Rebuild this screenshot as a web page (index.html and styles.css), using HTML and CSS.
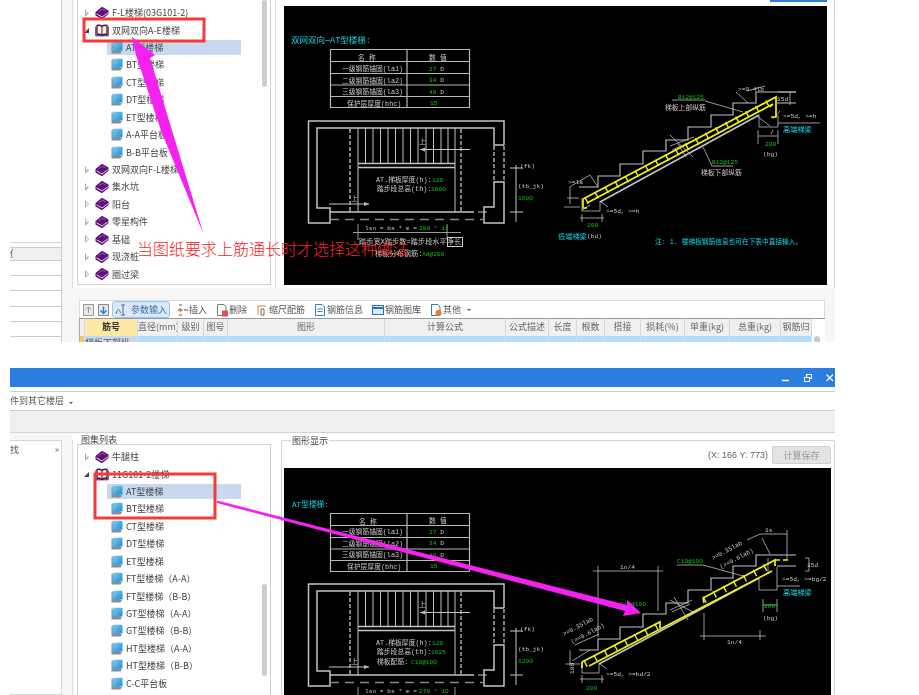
FILE: index.html
```html
<!DOCTYPE html>
<html lang="zh-CN">
<head>
<meta charset="utf-8">
<title>图集列表</title>
<link rel="stylesheet" href="styles.css">
</head>
<body>
<svg class="defs" width="0" height="0">
  <defs>
    <linearGradient id="docfill" x1="0" y1="0" x2="1" y2="1">
      <stop offset="0" stop-color="#7fd0f2"/>
      <stop offset="1" stop-color="#1c86cf"/>
    </linearGradient>
    <symbol id="book" viewBox="0 0 14 14">
      <path d="M.5 6 7 .8 13.500 4.500V8L7 13.200 .5 9.500Z" fill="#5e1078"/>
      <path d="M1.500 7.800 7 11 12.800 6.800" fill="none" stroke="#e4d4ec" stroke-width="1"/>
      <path d="M3.500 5.800 7.500 3.200 10.500 4.800" fill="none" stroke="#9a58b4" stroke-width="1"/>
    </symbol>
    <symbol id="open" viewBox="0 0 14 14">
      <path d="M2 2.500C4 2 6 2.500 7 3.500 8 2.500 10 2 12 2.500V11.500C10 11 8 11.500 7 12.500 6 11.500 4 11 2 11.500Z" fill="#fdf4d0" stroke="#4a1458" stroke-width="1.300"/>
      <path d="M7 3.500V12.500" stroke="#4a1458"/>
      <path d="M.8 3.500V12.800H13.200V3.500" fill="none" stroke="#4a1458"/>
    </symbol>
    <symbol id="doc" viewBox="0 0 12 13">
      <path d="M.5 2V12.500H9.500L11 10H2V2Z" fill="#8c8c8c"/>
      <path d="M1.500 .8H10.500C11.300 .8 11.500 1.200 11.500 2V9.500C9.500 9.500 6 10 1.500 11Z" fill="url(#docfill)"/>
    </symbol>
    <g id="plan" fill="none" stroke="#c4c4c4">
      <path stroke-width="1.500" d="M504 145V121H308.500V223H330V208H317V128H494V145H504M504 182H494V207H484V223H504Z"/>
      <path stroke-dasharray="4 2" stroke-width="1.300" d="M494 146V182M504 146V182M350 129V212M461 129V212"/>
      <path d="M358 128V212M455 128V212M365.500 128V163M373 128V163M380.500 128V163M388 128V163M395.500 128V163M403 128V163M410.500 128V163M418 128V163M426 128V163M433.500 128V163M441 128V163M448 128V163"/>
      <path stroke-width="1.300" d="M358 163.500H455M358 167.500H455M330 212H474"/>
      <path d="M420 149.500H470M329 204H369M478 212H487M510 168H523M510 212H523M516 165V222"/>
      <path stroke="#888" stroke-width="1.400" stroke-dasharray="9 6" d="M330 219.500H484"/>
    </g>
    <g id="grid" fill="none" stroke="#b8b8b8">
      <path stroke-width="1.200" d="M330.500 49.500H469.500V107.500H330.500ZM407 49.500V107.500"/>
      <path stroke-width="1.200" d="M331 61.500H469M331 73.500H469M331 85H469M331 96.500H469"/>
    </g>
    <path id="steps" fill="none" stroke="#c4c4c4" stroke-width="1.100" d="M579 187H598V176H620V164H643V151H666V140H688V127H711V115H733V103H756V92H796M777 103H796"/>
  </defs>
</svg>

<section class="shot shot-top">
  <aside class="side">
    <div class="side-line"></div>
    <div class="side-head"><span class="side-cap">值</span></div>
    <div class="side-row"></div>
    <div class="side-row"></div>
    <div class="side-row"></div>
    <div class="side-row"></div>
    <div class="side-row"></div>
  </aside>
  <div class="work">
    <div class="panes panes-top">
      <div class="tree tree-top">
        <div class="bar bar-top"></div>
        <div class="node"><i class="exp"></i><svg class="ico-book"><use href="#book"/></svg><span>F-L楼梯(03G101-2)</span></div>
        <div class="node"><i class="exp on"></i><svg class="ico-book"><use href="#open"/></svg><span>双网双向A-E楼梯</span></div>
        <div class="leaf sel"><svg class="ico-doc"><use href="#doc"/></svg><span>AT型楼梯</span></div>
        <div class="leaf"><svg class="ico-doc"><use href="#doc"/></svg><span>BT型楼梯</span></div>
        <div class="leaf"><svg class="ico-doc"><use href="#doc"/></svg><span>CT型楼梯</span></div>
        <div class="leaf"><svg class="ico-doc"><use href="#doc"/></svg><span>DT型楼梯</span></div>
        <div class="leaf"><svg class="ico-doc"><use href="#doc"/></svg><span>ET型楼梯</span></div>
        <div class="leaf"><svg class="ico-doc"><use href="#doc"/></svg><span>A-A平台板</span></div>
        <div class="leaf"><svg class="ico-doc"><use href="#doc"/></svg><span>B-B平台板</span></div>
        <div class="node"><i class="exp"></i><svg class="ico-book"><use href="#book"/></svg><span>双网双向F-L楼梯</span></div>
        <div class="node"><i class="exp"></i><svg class="ico-book"><use href="#book"/></svg><span>集水坑</span></div>
        <div class="node"><i class="exp"></i><svg class="ico-book"><use href="#book"/></svg><span>阳台</span></div>
        <div class="node"><i class="exp"></i><svg class="ico-book"><use href="#book"/></svg><span>零星构件</span></div>
        <div class="node"><i class="exp"></i><svg class="ico-book"><use href="#book"/></svg><span>基础</span></div>
        <div class="node"><i class="exp"></i><svg class="ico-book"><use href="#book"/></svg><span>现浇桩</span></div>
        <div class="node"><i class="exp"></i><svg class="ico-book"><use href="#book"/></svg><span>圈过梁</span></div>
      </div>
      <div class="view view-top">
        <div class="save-edge"></div>
        <svg class="cad cad-top" viewBox="284 6 543 279">
          <text class="c-ti" x="291" y="43">双网双向—AT型楼梯:</text>
          <use href="#grid"/>
          <text class="c-w" x="358" y="60">名 称</text>
          <text class="c-w" x="429" y="60">数 值</text>
          <text class="c-w" x="342" y="71">一级钢筋锚固(la1)</text>
          <text class="c-w" x="342" y="83">二级钢筋锚固(la2)</text>
          <text class="c-w" x="342" y="94">三级钢筋锚固(la3)</text>
          <text class="c-w" x="347" y="106">保护层厚度(bhc)</text>
          <text class="c-g" x="429" y="71">27 <tspan class="c-n">D</tspan></text>
          <text class="c-g" x="429" y="82">34 <tspan class="c-n">D</tspan></text>
          <text class="c-g" x="429" y="94">40 <tspan class="c-n">D</tspan></text>
          <text class="c-g" x="430" y="105">15</text>
          <use href="#plan"/>
          <path class="c-tick" d="M420 149.500l5-2v4ZM369 204l-5-2v4Z"/>
          <text class="c-w" x="419" y="144">上</text>
          <text class="c-w" x="351" y="201">上</text>
          <text class="c-w" x="376" y="182">AT.梯板厚度(h):</text><text class="c-g" x="432" y="182">120</text>
          <text class="c-w" x="377" y="191">踏步段总高(th):</text><text class="c-g" x="431" y="191">1800</text>
          <text class="c-n" x="520" y="168">(fk)</text>
          <text class="c-n" x="518" y="188">(tb_jk)</text>
          <text class="c-g" x="518" y="200">1600</text>
          <path class="c-line" d="M353 232.500H461M358 224V240M447 224V240"/>
          <text class="c-n" x="365" y="230">lsn = bs * m = </text><text class="c-g" x="419" y="230">280 * 11</text>
          <text class="c-m" x="359" y="244">踏步宽X踏步数=踏步段水平净长</text>
          <rect class="c-box" x="447.500" y="237.500" width="15" height="9"/>
          <text class="c-m" x="375" y="256">梯板分布钢筋:</text><text class="c-g" x="422" y="256">A8@200</text>

          <use href="#steps"/>
          <path class="c-line" d="M582 198V211H600V201M759 115V127H778V115M778 123H820M672 100H705M705 101 743 112M703 147 712 166H733M567 198H579M570 186V204M564 207H580M736 92 748 103M747 91 765 86M790 92V105M778 92H796M773 130 771 134M758 130V144M778 130V144M758 136H778M580 218H604M582 214V222M602 214V222M600 201 608 207M571 186 590 175 598 187M773 119 780 111M757 116 770 126M582 210 590 205"/>
          <path class="c-thick" d="M600 202 759 115"/>
          <path class="c-line" d="M670 135 693 157M670 146 694 137M672 150 690 142M686 157 678 144"/>
          <path class="c-yl" d="M583 199 776 97V117H771M583 199V208H587M587 203 773 104 770 107"/>
          <path class="c-tk" d="M586 201 774 100"/>
          <text class="c-n" x="738" y="91">&gt;=0.4lb</text>
          <text class="c-n" x="777" y="101">15d</text>
          <text class="c-n" x="783" y="118">&gt;=5d, &gt;=h</text>
          <text class="c-cy" x="783" y="132">高端梯梁</text>
          <text class="c-g" x="765" y="146">200</text>
          <text class="c-n" x="763" y="156">(bg)</text>
          <text class="c-g" x="678" y="99">B12@125</text>
          <text class="c-w" x="665" y="110">梯板上部纵筋</text>
          <text class="c-g" x="712" y="164">B12@125</text>
          <text class="c-w" x="701" y="175">梯板下部纵筋</text>
          <text class="c-n" x="568" y="184">&gt;=la</text>
          <text class="c-n" x="606" y="213">&gt;=5d, &gt;=h</text>
          <text class="c-g" x="587" y="227">200</text>
          <text class="c-cy" x="558" y="239">低端梯梁</text><text class="c-n" x="587" y="238">(bd)</text>
          <text class="c-cs" x="655" y="244">注: 1. 楼梯板钢筋信息也可在下表中直接输入。</text>
        </svg>
      </div>
    </div>
    <div class="lower">
      <div class="tools">
        <span class="tl tl-sq"><svg class="ti"><path d="M1.500 1.500H11.500V12.500H1.500ZM6.500 10V4M4 6.500 6.500 4 9 6.500" fill="#e8e8e8" stroke="#999"/></svg></span>
        <span class="tl tl-sq"><svg class="ti"><path d="M1.500 1.500H11.500V12.500H1.500Z" fill="#e8e8e8" stroke="#888"/><path d="M6.500 3.500V10M3.500 7.500 6.500 10.500 9.500 7.500" fill="none" stroke="#2a7fd8" stroke-width="1.500"/></svg></span>
        <span class="tl tl-on"><svg class="ti"><path d="M1 11C3 5 4 5 5.500 10M8 2V12M6 2H10M6 12H10" fill="none" stroke="#667"/></svg>参数输入</span>
        <span class="tl"><svg class="ti"><path d="M3 2H6M3 12H6M8 7H12M2 7H7" fill="none" stroke="#555"/><path d="M2 7 5 4.500V9.500Z" fill="#e67a1e"/></svg>插入</span>
        <span class="tl"><svg class="ti"><path d="M1.500 1.500H8L10 4V12.500H1.500Z" fill="#fff" stroke="#777"/><rect x="6" y="7.500" width="6" height="6" fill="#d9534f"/></svg>删除</span>
        <span class="tl"><svg class="ti"><path d="M2 3H10M2 3V12" fill="none" stroke="#e08030"/><path d="M5 6H8V12H5Z" fill="none" stroke="#666"/></svg>缩尺配筋</span>
        <span class="tl"><svg class="ti"><path d="M1.500 1.500H8L10.500 4V12.500H1.500Z" fill="#fff" stroke="#3a7cc0"/><path d="M3.500 6H8.500M3.500 8.500H8.500" stroke="#3a7cc0"/></svg>钢筋信息</span>
        <span class="tl"><svg class="ti"><rect x=".5" y="2.500" width="11" height="9" fill="#dceaf8" stroke="#2a70b8"/><path d="M.5 5H11.500" stroke="#2a70b8" stroke-width="2"/></svg>钢筋图库</span>
        <span class="tl"><svg class="ti"><path d="M1.500 1.500H8L10 4V12.500H1.500Z" fill="#fff" stroke="#3a7cc0"/><circle cx="8.500" cy="10" r="3" fill="#e67a1e"/></svg>其他<i class="drop"></i></span>
      </div>
      <div class="table">
        <div class="th gut"></div><div class="th th-key">筋号</div><div class="th">直径(mm)</div><div class="th">级别</div><div class="th">图号</div><div class="th">图形</div><div class="th">计算公式</div><div class="th">公式描述</div><div class="th">长度</div><div class="th">根数</div><div class="th">搭接</div><div class="th">损耗(%)</div><div class="th">单重(kg)</div><div class="th">总重(kg)</div><div class="th">钢筋归</div><div class="sb"></div>
        <div class="td gut-y"></div><div class="td td-key">梯板下部纵</div><div class="td"></div><div class="td"></div><div class="td"></div><div class="td"></div><div class="td"></div><div class="td"></div><div class="td"></div><div class="td"></div><div class="td"></div><div class="td"></div><div class="td"></div><div class="td"></div><div class="td"></div><div class="sb sb-b"></div>
      </div>
    </div>
  </div>
</section>

<section class="shot shot-bot">
  <header class="title">
    <svg class="wbtn" viewBox="0 0 10 10"><path d="M1 7.500H8" stroke="#fff" stroke-width="1.500"/></svg>
    <svg class="wbtn" viewBox="0 0 10 10"><path d="M1.500 4.500H6.500V8.500H1.500ZM3.500 4V1.500H8.500V5.500H7" fill="none" stroke="#fff" stroke-width="1.100"/></svg>
    <svg class="wbtn" viewBox="0 0 10 10"><path d="M1.500 1.500 8 8M8 1.500 1.500 8" stroke="#fff" stroke-width="1.200"/></svg>
  </header>
  <div class="menu"><span>件到其它楼层</span><i class="drop"></i></div>
  <div class="strip"></div>
  <div class="body">
    <aside class="side2"><div class="side2-head"><span>找</span><span class="more">»</span></div></aside>
    <div class="panes panes-bot">
      <fieldset class="group group-tree">
        <legend>图集列表</legend>
        <div class="tree tree-bot">
          <div class="bar bar-bot"></div>
          <div class="node"><i class="exp"></i><svg class="ico-book"><use href="#book"/></svg><span>牛腿柱</span></div>
          <div class="node"><i class="exp on"></i><svg class="ico-book"><use href="#open"/></svg><span>11G101-2楼梯</span></div>
          <div class="leaf sel"><svg class="ico-doc"><use href="#doc"/></svg><span>AT型楼梯</span></div>
          <div class="leaf"><svg class="ico-doc"><use href="#doc"/></svg><span>BT型楼梯</span></div>
          <div class="leaf"><svg class="ico-doc"><use href="#doc"/></svg><span>CT型楼梯</span></div>
          <div class="leaf"><svg class="ico-doc"><use href="#doc"/></svg><span>DT型楼梯</span></div>
          <div class="leaf"><svg class="ico-doc"><use href="#doc"/></svg><span>ET型楼梯</span></div>
          <div class="leaf"><svg class="ico-doc"><use href="#doc"/></svg><span>FT型楼梯（A-A）</span></div>
          <div class="leaf"><svg class="ico-doc"><use href="#doc"/></svg><span>FT型楼梯（B-B）</span></div>
          <div class="leaf"><svg class="ico-doc"><use href="#doc"/></svg><span>GT型楼梯（A-A）</span></div>
          <div class="leaf"><svg class="ico-doc"><use href="#doc"/></svg><span>GT型楼梯（B-B）</span></div>
          <div class="leaf"><svg class="ico-doc"><use href="#doc"/></svg><span>HT型楼梯（A-A）</span></div>
          <div class="leaf"><svg class="ico-doc"><use href="#doc"/></svg><span>HT型楼梯（B-B）</span></div>
          <div class="leaf"><svg class="ico-doc"><use href="#doc"/></svg><span>C-C平台板</span></div>
        </div>
      </fieldset>
      <fieldset class="group group-view">
        <legend>图形显示</legend>
        <div class="status"><span>(X: 166 Y: 773)</span><span class="calc">计算保存</span></div>
        <svg class="cad cad-bot" viewBox="284 468 547 227">
          <text class="c-ti2" x="292" y="507">AT型楼梯:</text>
          <use href="#grid" y="464"/>
          <text class="c-w" x="359" y="524">名 称</text>
          <text class="c-w" x="429" y="523">数 值</text>
          <text class="c-w" x="342" y="534">一级钢筋锚固(la1)</text>
          <text class="c-w" x="342" y="546">二级钢筋锚固(la2)</text>
          <text class="c-w" x="342" y="557">三级钢筋锚固(la3)</text>
          <text class="c-w" x="347" y="569">保护层厚度(bhc)</text>
          <text class="c-g" x="429" y="534">27 <tspan class="c-n">D</tspan></text>
          <text class="c-g" x="429" y="545">34 <tspan class="c-n">D</tspan></text>
          <text class="c-g" x="429" y="557">40 <tspan class="c-n">D</tspan></text>
          <text class="c-g" x="430" y="568">15</text>
          <use href="#plan" y="463"/>
          <path class="c-tick" d="M420 612.500l5-2v4ZM369 667l-5-2v4Z"/>
          <text class="c-w" x="419" y="607">上</text>
          <text class="c-w" x="351" y="664">上</text>
          <text class="c-w" x="376" y="645">AT.梯板厚度(h):</text><text class="c-g" x="432" y="645">120</text>
          <text class="c-w" x="377" y="654">踏步段总高(th):</text><text class="c-g" x="431" y="654">1625</text>
          <text class="c-w" x="377" y="664">梯板配筋:</text><text class="c-g" x="411" y="664">C10@100</text>
          <text class="c-n" x="520" y="631">(fk)</text>
          <text class="c-n" x="518" y="651">(tb_jk)</text>
          <text class="c-g" x="518" y="663">1200</text>
          <path class="c-line" d="M358 687V695M455 687V695"/>
          <text class="c-n" x="365" y="693">lsn = bs * m = </text><text class="c-g" x="419" y="693">270 * 10</text>

          <use href="#steps" y="463"/>
          <path class="c-line" d="M582 662V673H599V663M759 578V590H777V567M777 586H800M593 571H663M598 566V637M658 566V611M704 613V640M700 636H766M760 630V640M677 565H703L743 576M760 534H787M787 530V560M747 540 760 534M762 538 770 554M768 558V574M805 558H809V571H805M763 599V612M777 599V612M763 605H777M580 679H604M582 675V683M602 675V683M599 663 607 669M570 650V666M572 661 590 650M565 664H580M575 645 599 634"/>
          <path class="c-thick" d="M599 664 759 578"/>
          <path class="c-line" d="M670 600 693 612M670 610 692 600M672 612 690 604M674 597 688 620"/>
          <path class="c-yl" d="M582 662 660 622 660 628M582 662V668M703 598 775 560V566M703 598 704 603M589 666 772 571"/>
          <path class="c-yd" d="M775 560H790"/>
          <path class="c-tk" d="M585 664 660 625M704 600 774 563"/>
          <text class="c-g" x="677" y="563">C10@100</text>
          <text class="c-g" x="620" y="606">C10@100</text>
          <text class="c-n" x="620" y="569">1n/4</text>
          <text class="c-n" x="727" y="644">1n/4</text>
          <text class="c-n" x="765" y="532">1s</text>
          <text class="c-n" x="807" y="567">15d</text>
          <text class="c-n" x="782" y="581">&gt;=5d, &gt;=bg/2</text>
          <text class="c-cy" x="783" y="595">高端梯梁</text>
          <text class="c-g" x="764" y="608">200</text>
          <text class="c-n" x="763" y="620">(bg)</text>
          <text class="c-n" x="606" y="676">&gt;=5d, &gt;=bd/2</text>
          <text class="c-g" x="586" y="690">200</text>
          <text class="c-n" transform="translate(713 560) rotate(-28)">&gt;=0.35lab</text>
          <text class="c-n" transform="translate(721 569) rotate(-28)">(&gt;=0.6lab)</text>
          <text class="c-n" transform="translate(564 636) rotate(-28)">&gt;=0.35lab</text>
          <text class="c-n" transform="translate(572 644) rotate(-28)">(&gt;=0.6lab)</text>
          <text class="c-n" transform="translate(574 674) rotate(-90)">18d</text>
        </svg>
      </fieldset>
    </div>
  </div>
</section>

<svg class="notes" viewBox="0 0 919 695">
  <rect class="n-box" x="84" y="19" width="120" height="22"/>
  <rect class="n-box" x="95" y="474" width="120" height="44"/>
  <path class="n-arrow" d="M132 37 155 55 150 58 203.500 234 161.500 132 136 55Z"/>
  <path class="n-arrow" d="M217 500.500 627 605 627 600 641 613 623 616 625 611 217 503Z"/>
  <text class="n-text" x="137" y="255">当图纸要求上筋通长时才选择这种做法</text>
</svg>
</body>
</html>
```
FILE: styles.css
```css
* { box-sizing: border-box; }
html, body { margin: 0; padding: 0; background: #fff; }
body {
  position: relative;
  width: 919px;
  height: 695px;
  overflow: hidden;
  font-family: "Noto Sans CJK SC", "Liberation Sans", sans-serif;
  font-size: 9px;
  color: #444;
}
.defs { position: absolute; }

.shot { margin-left: 10px; width: 825px; overflow: hidden; filter: blur(.35px); }
.shot-top { display: flex; height: 342px; background: #fff; }
.shot-bot { display: flex; flex-direction: column; height: 327px; margin-top: 26px; background: #fff; }

/* left strip of the upper capture */
.side { width: 52px; flex: none; padding-top: 242px; border-right: 1px solid #ccc; }
.side-line { height: 5px; border-top: 1px solid #d8d8d8; }
.side-head { height: 14px; border-top: 1px solid #ccc; border-bottom: 1px solid #ccc; background: #f0f0f0; font-size: 9px; line-height: 12px; }
.side-cap { display: block; width: 3px; overflow: hidden; color: #555; }
.side-row { height: 15.200px; border-bottom: 1px solid #ccc; }

.work { flex: 1; min-width: 0; display: flex; flex-direction: column; padding-left: 10px; background: #f6f6f6; }
.panes-top { display: flex; height: 288px; flex: none; background: #fff; border-right: 1px solid #ccc; border-left: 1px solid #ddd; padding-right: 3px; }

/* tree */
.tree { position: relative; width: 194px; flex: none; background: #fff; border: 1px solid #d0d0d0; font-size: 9px; color: #444; }
.tree-top { margin: -1px 0 3px 4px; padding-top: 4px; }
.tree-bot { height: 260px; padding-top: 3px; margin: -2px 0 0 4px; }
.node, .leaf { display: flex; align-items: center; height: 17.430px; white-space: nowrap; }
.node { padding-left: 6px; }
.exp { width: 6px; height: 8px; flex: none; margin-right: 2px; position: relative; }
.exp::before, .exp::after {
  content: "";
  position: absolute;
  top: 0;
  border-left: 4px solid #aaa;
  border-top: 4px solid transparent;
  border-bottom: 4px solid transparent;
}
.exp::before { left: 1px; }
.exp::after { left: 2px; top: 1.500px; border-left: 2.500px solid #fff; border-top-width: 2.500px; border-bottom-width: 2.500px; }
.exp.on::after { display: none; }
.exp.on::before {
  left: 0; top: 2px;
  border: 0;
  width: 0; height: 0;
  border-bottom: 5px solid #444;
  border-left: 5px solid transparent;
}
.ico-book { width: 14px; height: 14px; flex: none; margin-right: 3px; margin-left: 3px; }
.ico-doc { width: 12px; height: 13px; flex: none; margin-right: 3px; margin-left: -1px; }
.leaf { margin-left: 29px; width: 134px; padding-left: 5px; }
.leaf.sel { background: #c8d8ee; height: 15.430px; margin-top: 1px; margin-bottom: 1px; }
.bar { position: absolute; left: 184px; width: 5px; background: #cdcdcd; border-radius: 3px; }
.bar-top { top: 0; height: 87px; }
.bar-bot { top: 139px; height: 92px; }

/* drawing panes */
.view-top { flex: 1; min-width: 0; position: relative; padding: 6px 0 0 8px; border-left: 1px solid #ddd; margin-left: 4px; }
.cad { display: block; background: #000; }
.cad-top { width: 543px; height: 279px; }
.cad-bot { width: 547px; height: 227px; }
.save-edge { position: absolute; right: 4px; top: 0; width: 57px; height: 2px; background: #2c80dc; }

.c-w, .c-n, .c-m, .c-g, .c-cy, .c-cs, .c-ti, .c-ti2 { font-family: "Liberation Mono", "Noto Sans CJK SC", monospace; }
.c-w { font-size: 6.800px; fill: #c9c9c9; }
.c-n { font-size: 6.200px; fill: #c9c9c9; }
.c-m { font-size: 7.200px; fill: #c9c9c9; }
.c-g { font-size: 6.200px; fill: #0fc30f; }
.c-cy { font-size: 7.200px; fill: #0fd8e8; }
.c-cs { font-size: 6.700px; fill: #0fd8e8; }
.c-ti { font-size: 8.500px; fill: #0fd8e8; }
.c-ti2 { font-size: 7.700px; fill: #0fd8e8; }
.c-line { fill: none; stroke: #bdbdbd; stroke-width: .8; }
.c-thick { fill: none; stroke: #c4c4c4; stroke-width: 1.600; }
.c-tick { fill: #bbb; }
.c-box { fill: none; stroke: #ccc; }
.c-yl { fill: none; stroke: #f4f011; stroke-width: 1.700; }
.c-yd { fill: none; stroke: #f4f011; stroke-width: 1.700; stroke-dasharray: 5 3; }
.c-tk { fill: none; stroke: #f4f011; stroke-width: 7; stroke-dasharray: 1.400 10; }

/* lower grid */
.lower { flex: 1; padding: 12px 10px 0 7px; background: #f6f6f6; min-height: 0; }
.tools {
  display: flex; align-items: center; gap: 9px;
  height: 18px; padding-left: 2px;
  background: #fff; border: 1px solid #ddd; border-bottom: 0;
  font-size: 9px; color: #555; white-space: nowrap;
}
.tl { display: inline-flex; align-items: center; gap: 1px; height: 16px; }
.tl-sq { width: 12px; margin-right: -6px; }
.tl-on { background: #d8e9f9; border: 1px solid #9cc8f0; border-radius: 3px; padding: 0 2px; color: #3d6f9e; gap: 4px; height: 17px; margin-right: -3px; }
.ti { width: 14px; height: 14px; flex: none; margin-right: -2px; }
.drop { display: inline-block; width: 0; height: 0; margin-left: 5px; border: 2.500px solid transparent; border-top-color: #555; border-bottom: 0; }
.table {
  display: grid;
  grid-template-columns: 5px 53px 40px 26px 24px 157px 121px 43px 28px 28px 36px 44px 45px 51px 31px 12px;
  grid-auto-rows: 17px;
  border-top: 1px solid #999;
  border-left: 1px solid #aaa;
  background: #fff;
  font-size: 9px;
}
.th { background: #f0f0f0; border-right: 1px solid #d8d8d8; text-align: center; line-height: 16px; color: #666; white-space: nowrap; overflow: hidden; }
.th-key { background: #fde8a6; color: #333; font-weight: 700; }
.gut { background: #f0f0f0; }
.td { background: #b6dafc; border-right: 1px solid #cfe4fa; }
.gut-y { background: #f0c860; }
.td-key { background: #c8d8ee; color: #555; white-space: nowrap; overflow: hidden; }
.sb { background: #fff; }
.sb-b { background: #ccc; width: 6px; margin-left: 2px; border-radius: 3px; }

/* lower capture chrome */
.title { height: 19px; flex: none; background: #2b7ee0; display: flex; justify-content: flex-end; align-items: center; gap: 12px; }
.wbtn { width: 10px; height: 10px; }
.menu { height: 20px; flex: none; margin-top: 4px; background: #fff; border-top: 1px solid #ccc; border-bottom: 1px solid #ccc; line-height: 18px; color: #555; white-space: nowrap; }
.strip { height: 22px; flex: none; background: #f0f0f0; border-bottom: 1px solid #d4d4d4; }
.body { flex: 1; min-height: 0; display: flex; background: #f6f6f6; }
.side2 { width: 52px; flex: none; margin-top: 7px; background: #fff; border: 1px solid #d8d8d8; border-left: 0; }
.side2-head { display: flex; justify-content: space-between; height: 17px; line-height: 17px; padding-right: 2px; color: #555; }
.more { color: #666; }
.panes-bot { flex: 1; display: flex; margin-left: 10px; min-width: 0; background: #fff; }
.group { margin: 0; padding: 0; border: 0; min-width: 0; }
.group legend { padding: 0 1px; font-size: 9px; line-height: 13px; color: #444; }
.group-tree { width: 209px; flex: none; border-left: 1px solid #ddd; }
.group-tree legend { margin-left: 7px; }
.group-view { flex: 1; border: 1px solid #d4d4d4; border-bottom: 0; border-radius: 2px; margin-top: 1px; padding: 0 0 0 2px; }
.group-view legend { margin-left: 7px; }
.status { display: flex; justify-content: flex-end; align-items: center; gap: 4px; height: 19px; padding-right: 3px; margin: -2px 0 4px; color: #666; font-family: "Liberation Sans", "Noto Sans CJK SC", sans-serif; }
.calc { width: 59px; height: 18px; line-height: 17px; text-align: center; background: #e3e3e3; border: 1px solid #d0d0d0; border-radius: 2px; color: #999; font-family: "Noto Sans CJK SC", sans-serif; }

/* annotations laid over both captures */
.notes { position: absolute; left: 0; top: 0; width: 919px; height: 695px; pointer-events: none; }
.n-box { fill: none; stroke: #f63a3a; stroke-width: 3; }
.n-arrow { fill: #f521f0; }
.n-text { fill: #f5262a; font-family: "Noto Sans CJK SC", sans-serif; font-size: 16px; font-weight: 300; }
```
